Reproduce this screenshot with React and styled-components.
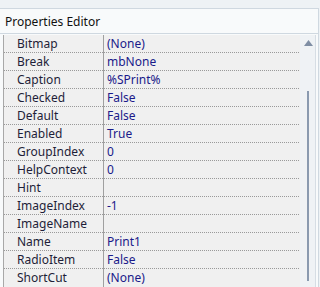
import React from "react";
import styled, { createGlobalStyle } from "styled-components";

const Global = createGlobalStyle`
  html, body { margin: 0; padding: 0; background: #eef2f5; }
  body { font-family: "Noto Sans", "Open Sans", sans-serif; font-size: 12px; }
`;

const Page = styled.div`
  width: 320px;
  height: 287px;
  overflow: hidden;
  padding-top: 8px;
  box-sizing: border-box;
`;

const Panel = styled.div`
  width: 319px;
  border-top: 1px solid #cfd8e0;
  border-right: 1px solid #cfd8e0;
  background: #f8fafb;
  box-sizing: border-box;
`;

const Title = styled.div`
  height: 24px;
  display: flex;
  align-items: center;
  padding-left: 5px;
  color: #111;
  font-size: 12px;
  border-bottom: 1px solid #cfd8e0;
`;

const Body = styled.div`
  display: flex;
  padding: 1px 0 0 3px;
`;

const GridWrap = styled.div`
  display: flex;
  flex-direction: column;
`;

const Grid = styled.div`
  width: 297px;
  border-left: 1px solid #a8a8a8;
  background: #f0f0f0;
  box-sizing: border-box;
`;

const Row = styled.div`
  display: grid;
  grid-template-columns: 99px 1px 1fr;
  height: 18px;
  box-sizing: border-box;
  padding-bottom: 1px;
  background-image: ${(p) =>
    p.$last
      ? "none"
      : "repeating-linear-gradient(to right, #9a9a9a 0 1px, transparent 1px 2px)"};
  background-size: 100% 1px;
  background-position: bottom left;
  background-repeat: no-repeat;
`;

const Name = styled.div`
  padding-left: 13px;
  line-height: 17px;
  color: #1e1e38;
  white-space: nowrap;
`;

const Sep = styled.div`
  background: #a0a0a0;
  margin-bottom: -1px;
`;

const Value = styled.div`
  padding-left: 3px;
  line-height: 17px;
  color: #1a1a8a;
  white-space: nowrap;
`;

const BottomLine = styled.div`
  height: 1px;
  margin-left: -3px;
  width: 300px;
  background: #000;
`;

const Scrollbar = styled.div`
  width: 16px;
  display: flex;
  flex-direction: column;
  align-items: center;
  background: #eff2f5;
  border-right: 1px solid #d6dde4;
  box-sizing: border-box;
  padding-top: 5px;
`;

const Arrow = styled.svg`
  display: block;
  margin-left: 1px;
`;

const Thumb = styled.div`
  width: 2px;
  height: 190px;
  margin-top: 45px;
  margin-left: 1px;
  background: #8a9ab0;
`;

const rows = [
  ["Bitmap", "(None)"],
  ["Break", "mbNone"],
  ["Caption", "%SPrint%"],
  ["Checked", "False"],
  ["Default", "False"],
  ["Enabled", "True"],
  ["GroupIndex", "0"],
  ["HelpContext", "0"],
  ["Hint", ""],
  ["ImageIndex", "-1"],
  ["ImageName", ""],
  ["Name", "Print1"],
  ["RadioItem", "False"],
  ["ShortCut", "(None)"],
];

export default function App() {
  return (
    <Page>
      <Global />
      <Panel>
        <Title>Properties Editor</Title>
        <Body>
          <GridWrap>
            <Grid>
              {rows.map(([n, v], i) => (
                <Row key={n} $last={i === rows.length - 1}>
                  <Name>{n}</Name>
                  <Sep />
                  <Value>{v}</Value>
                </Row>
              ))}
            </Grid>
            <BottomLine />
          </GridWrap>
          <Scrollbar>
            <Arrow width="9" height="6" viewBox="0 0 9 6">
              <path d="M4.5 0 L9 6 L0 6 Z" fill="#7f8ea4" />
            </Arrow>
            <Thumb />
          </Scrollbar>
        </Body>
      </Panel>
    </Page>
  );
}
